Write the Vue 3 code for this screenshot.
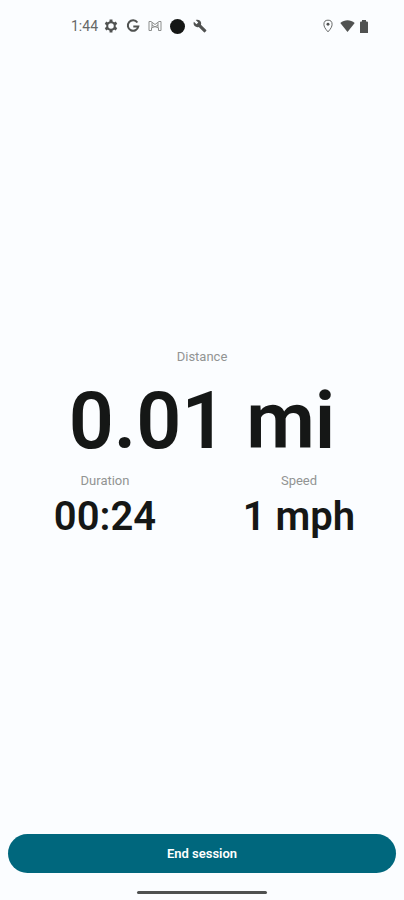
<script setup>
const metrics = [
  { label: 'Duration', value: '00:24' },
  { label: 'Speed', value: '1 mph' },
]
</script>

<template>
  <div class="screen">
    <header class="status">
      <div class="left">
        <span class="clock">1:44</span>
        <div class="icons">
          <svg class="icon" viewBox="0 0 24 24" aria-hidden="true">
            <circle cx="12" cy="12" r="6.500" fill="none" stroke="currentColor" stroke-width="3.500" />
            <path fill="none" stroke="currentColor" stroke-width="5" d="M12 1v4M12 19v4M2.500 6.500l3.500 2M18 15.500l3.500 2M2.500 17.500l3.500-2M18 8.500l3.500-2" />
          </svg>
          <svg class="icon" viewBox="0 0 24 24" aria-hidden="true">
            <path fill="none" stroke="currentColor" stroke-width="3.500" d="M19.500 6A9 9 0 1 0 21 13H12.500" />
          </svg>
          <svg class="icon mail" viewBox="0 0 28 24" aria-hidden="true">
            <path fill="none" stroke="currentColor" stroke-width="2" d="M2 21V3h4l8 6 8-6h4v18h-5v-5l-7-3-7 3v5zM8 16V5M20 16V5M8 10l6 4 6-4" />
          </svg>
          <svg class="dot" viewBox="0 0 16 16" aria-hidden="true"><circle cx="8" cy="8" r="8" fill="currentColor" /></svg>
          <svg class="icon" viewBox="0 0 24 24" aria-hidden="true">
            <path fill="currentColor" d="M22.700 19l-9.100-9.100c.9-2.300.4-5-1.500-6.900-2-2-5-2.400-7.400-1.300L9 6 6 9 1.600 4.700C.4 7.100.9 10.100 2.900 12.100c1.900 1.900 4.600 2.400 6.900 1.500l9.100 9.100c.4.4 1 .4 1.400 0l2.300-2.300c.5-.4.5-1.100.1-1.400z" />
          </svg>
        </div>
      </div>
      <div class="right">
        <svg class="icon" viewBox="0 0 24 24" aria-hidden="true">
          <path fill="none" stroke="currentColor" stroke-width="1.500" d="M12 22C7 16.500 5 13 5 9a7 7 0 0 1 14 0c0 4-2 7.500-7 13z" />
          <circle cx="12" cy="9" r="2.500" fill="currentColor" />
        </svg>
        <svg class="wifi" viewBox="0 0 24 20" aria-hidden="true"><path fill="currentColor" d="M12 20L0 5C7-1 17-1 24 5z" /></svg>
        <svg class="battery" viewBox="0 0 8 13" aria-hidden="true"><path fill="currentColor" d="M2 1.500V0h4v1.500h1q1 0 1 1V13H0V2.500q0-1 1-1z" /></svg>
      </div>
    </header>

    <main class="content">
      <section class="distance">
        <span class="label">Distance</span>
        <strong class="hero">0.01 mi</strong>
      </section>
      <div class="metrics">
        <section v-for="m in metrics" :key="m.label" class="metric">
          <span class="label">{{ m.label }}</span>
          <strong class="value">{{ m.value }}</strong>
        </section>
      </div>
    </main>

    <footer class="footer">
      <button type="button" class="end">End session</button>
      <div class="handle"></div>
    </footer>
  </div>
</template>

<style>
body {
  margin: 0;
  background: #fbfdff;
}
</style>

<style scoped>
.screen {
  min-height: 100vh;
  display: flex;
  flex-direction: column;
  background: #fbfdff;
  color: #151716;
  font-family: Roboto, sans-serif;
}
.status {
  display: flex;
  justify-content: space-between;
  align-items: center;
  height: 52px;
  padding: 0 36px 0 71px;
  color: #505251;
}
.left,
.right,
.icons {
  display: flex;
  align-items: center;
}
.left {
  gap: 6px;
}
.right {
  gap: 5px;
}
.icons {
  gap: 8px;
}
.clock {
  font-size: 14px;
  line-height: 20px;
  color: #666867;
}
.icon {
  width: 14px;
  height: 14px;
}
.mail {
  color: #8b8d8c;
}
.dot {
  width: 15px;
  height: 15px;
  color: #151716;
}
.wifi {
  width: 15px;
  height: 12px;
}
.battery {
  width: 8px;
  height: 13px;
}
.content {
  flex: 1;
  display: flex;
  flex-direction: column;
  justify-content: center;
  padding-top: 4px;
}
.distance,
.metric {
  display: flex;
  flex-direction: column;
  align-items: center;
}
.label {
  font-size: 13px;
  line-height: 20px;
  color: #929493;
}
.hero {
  padding-top: 4px;
  font-size: 79px;
  line-height: 100px;
  font-weight: 600;
}
.metrics {
  display: grid;
  grid-template-columns: 1fr 1fr;
  padding: 0 8px;
}
.value {
  font-size: 40px;
  line-height: 52px;
  font-weight: 600;
}
.footer {
  display: flex;
  flex-direction: column;
  align-items: center;
  gap: 18px;
  padding: 0 8px 6px;
}
.end {
  width: 100%;
  height: 39px;
  border: 0;
  border-radius: 20px;
  background: #00677d;
  color: #fff;
  font: 600 13px/20px Roboto, sans-serif;
}
.handle {
  width: 130px;
  height: 3px;
  border-radius: 2px;
  background: #4f5150;
}
</style>
